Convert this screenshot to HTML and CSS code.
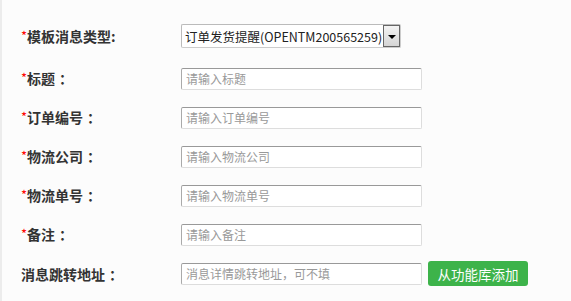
FILE: index.html
```html
<!DOCTYPE html>
<html>
<head>
    <title>模板消息</title>
    <link rel="stylesheet" href="styles.css">
</head>
<body>
    <div class="form">
        <div class="row first">
            <label class="label"><span class="req">*</span>模板消息类型:</label>
            <div class="select">
                <span class="select-text">订单发货提醒(OPENTM200565259)</span>
                <span class="select-arrow"></span>
            </div>
        </div>
        <div class="row">
            <label class="label"><span class="req">*</span>标题<span class="colon">：</span></label>
            <input type="text" class="field" placeholder="请输入标题">
        </div>
        <div class="row">
            <label class="label"><span class="req">*</span>订单编号<span class="colon">：</span></label>
            <input type="text" class="field" placeholder="请输入订单编号">
        </div>
        <div class="row">
            <label class="label"><span class="req">*</span>物流公司<span class="colon">：</span></label>
            <input type="text" class="field" placeholder="请输入物流公司">
        </div>
        <div class="row">
            <label class="label"><span class="req">*</span>物流单号<span class="colon">：</span></label>
            <input type="text" class="field" placeholder="请输入物流单号">
        </div>
        <div class="row">
            <label class="label"><span class="req">*</span>备注<span class="colon">：</span></label>
            <input type="text" class="field" placeholder="请输入备注">
        </div>
        <div class="row">
            <label class="label">消息跳转地址<span class="colon">：</span></label>
            <input type="text" class="field" placeholder="消息详情跳转地址，可不填">
            <button class="btn-add">从功能库添加</button>
        </div>
    </div>
</body>
</html>
```

FILE: styles.css
```css
body {
    margin: 0;
    height: 301px;
    background-color: #fcfcfc;
    border-left: 2px solid #ececec;
    font-family: "Noto Sans CJK SC", "Noto Sans", sans-serif;
    color: #333;
    overflow: hidden;
}
.form {
    padding: 18px 0 0 19px;
}
.row {
    display: flex;
    align-items: center;
    height: 39px;
}
.row.first {
    height: 41px;
    align-items: flex-start;
    padding-top: 6px;
    box-sizing: border-box;
}
.label {
    width: 160px;
    font-size: 14px;
    font-weight: bold;
    color: #333;
    line-height: 24px;
}
.colon {
    margin-left: 4px;
}
.req {
    color: #f00;
    font-weight: normal;
    font-size: 13px;
    position: relative;
    top: -1px;
}
.select {
    display: flex;
    align-items: center;
    width: 220px;
    height: 24px;
    box-sizing: border-box;
    border: 1px solid #aaa;
    border-color: #bbb #ccc #ccc #bbb;
    background: #fff;
    border-radius: 2px;
}
.select-text {
    flex: 1;
    padding-left: 3px;
    font-size: 12.5px;
    color: #222;
    white-space: nowrap;
    overflow: hidden;
}
.select-arrow {
    position: relative;
    width: 17px;
    height: 22px;
    box-sizing: border-box;
    border: 1px solid #666;
    background: linear-gradient(#f4f4f4, #d4d4d4);
}
.select-arrow::after {
    content: "";
    position: absolute;
    left: 4px;
    top: 9px;
    border-left: 4px solid transparent;
    border-right: 4px solid transparent;
    border-top: 4px solid #000;
}
.field {
    width: 241px;
    height: 22px;
    box-sizing: border-box;
    margin: 0;
    padding: 0 4px;
    border: 1px solid #ddd;
    border-color: #999 #ddd #ddd #aaa;
    border-radius: 2px;
    background: #fff;
    font-family: "Noto Sans CJK SC", "Noto Sans", sans-serif;
    font-size: 12px;
    color: #333;
    outline: none;
}
.field::placeholder {
    color: #999;
}
.btn-add {
    margin-left: 6px;
    width: 100px;
    height: 25px;
    border: none;
    border-radius: 3px;
    background-color: #3db34a;
    color: #fff;
    font-family: "Noto Sans CJK SC", "Noto Sans", sans-serif;
    font-size: 13.5px;
    padding: 0;
    cursor: pointer;
}
```
